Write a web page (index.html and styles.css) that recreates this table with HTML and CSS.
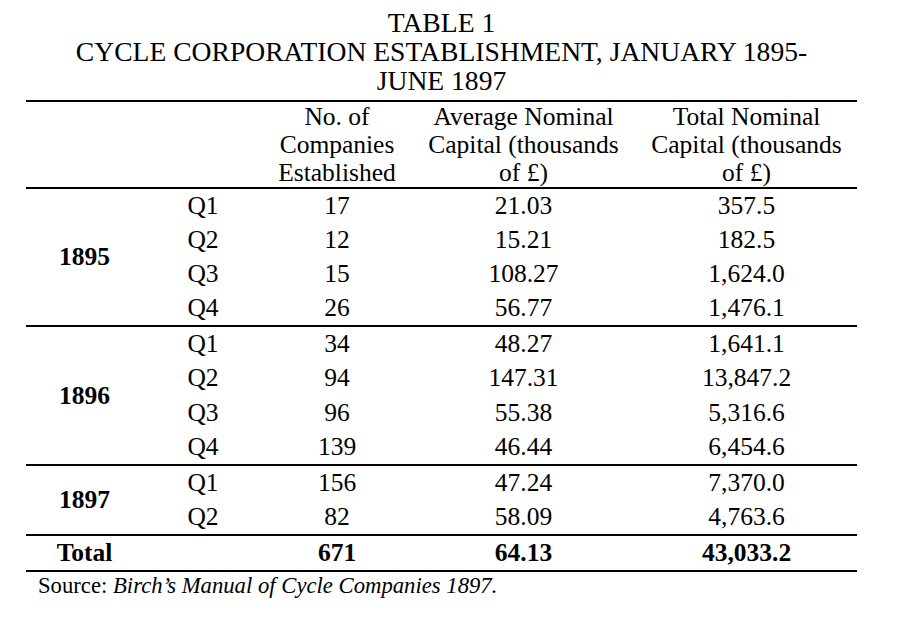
FILE: index.html
```html
<!DOCTYPE html>
<html lang="en">
<head>
<meta charset="utf-8">
<title>Table 1</title>
<link rel="stylesheet" href="styles.css">
</head>
<body>
<div class="page">
  <table class="tbl">
    <caption class="title">TABLE 1<br>CYCLE CORPORATION ESTABLISHMENT, JANUARY 1895-<br>JUNE 1897</caption>
    <colgroup>
      <col class="c-year"><col class="c-q"><col class="c-n"><col class="c-avg"><col class="c-tot">
    </colgroup>
    <thead>
      <tr>
        <th></th>
        <th></th>
        <th>No. of<br>Companies<br>Established</th>
        <th>Average Nominal<br>Capital (thousands<br>of £)</th>
        <th>Total Nominal<br>Capital (thousands<br>of £)</th>
      </tr>
    </thead>
    <tbody class="grp">
      <tr><th rowspan="4" class="year">1895</th><td>Q1</td><td>17</td><td>21.03</td><td>357.5</td></tr>
      <tr><td>Q2</td><td>12</td><td>15.21</td><td>182.5</td></tr>
      <tr><td>Q3</td><td>15</td><td>108.27</td><td>1,624.0</td></tr>
      <tr><td>Q4</td><td>26</td><td>56.77</td><td>1,476.1</td></tr>
    </tbody>
    <tbody class="grp ruled">
      <tr><th rowspan="4" class="year">1896</th><td>Q1</td><td>34</td><td>48.27</td><td>1,641.1</td></tr>
      <tr><td>Q2</td><td>94</td><td>147.31</td><td>13,847.2</td></tr>
      <tr><td>Q3</td><td>96</td><td>55.38</td><td>5,316.6</td></tr>
      <tr><td>Q4</td><td>139</td><td>46.44</td><td>6,454.6</td></tr>
    </tbody>
    <tbody class="grp ruled">
      <tr><th rowspan="2" class="year">1897</th><td>Q1</td><td>156</td><td>47.24</td><td>7,370.0</td></tr>
      <tr><td>Q2</td><td>82</td><td>58.09</td><td>4,763.6</td></tr>
    </tbody>
    <tbody class="grp ruled total">
      <tr><th class="year">Total</th><td></td><td>671</td><td>64.13</td><td>43,033.2</td></tr>
    </tbody>
  </table>
  <p class="source">Source: <i>Birch’s Manual of Cycle Companies 1897.</i></p>
</div>
</body>
</html>
```
FILE: styles.css
```css
html, body {
  margin: 0;
  background: #ffffff;
  color: #000000;
  font-family: "Liberation Serif", "Times New Roman", serif;
}

.page {
  padding: 8px 0 0 26px;
}

.tbl {
  border-collapse: separate;
  border-spacing: 0;
  width: 831px;
  table-layout: fixed;
  font-size: 25.5px;
}

.title {
  font-size: 27.6px;
  line-height: 29px;
  font-weight: normal;
  text-align: center;
  padding-bottom: 5px;
}

.c-year { width: 117px; }
.c-q { width: 120px; }
.c-n { width: 148px; }
.c-avg { width: 225px; }
.c-tot { width: 221px; }

.tbl th,
.tbl td {
  padding: 0;
  text-align: center;
  line-height: 28px;
}

.tbl thead th {
  font-weight: normal;
  vertical-align: bottom;
  padding-top: 1px;
  border-top: 2px solid #000;
  border-bottom: 2px solid #000;
}

.tbl tbody td {
  padding: 3px 0 3.1px;
}

.tbl .year {
  font-weight: bold;
  vertical-align: middle;
}

.ruled tr:first-child > * {
  border-top: 2px solid #000;
}

.total td,
.total th {
  border-bottom: 2px solid #000;
  font-weight: bold;
}

.source {
  margin: 1px 0 0 12px;
  font-size: 22.7px;
  line-height: 26px;
}
```
